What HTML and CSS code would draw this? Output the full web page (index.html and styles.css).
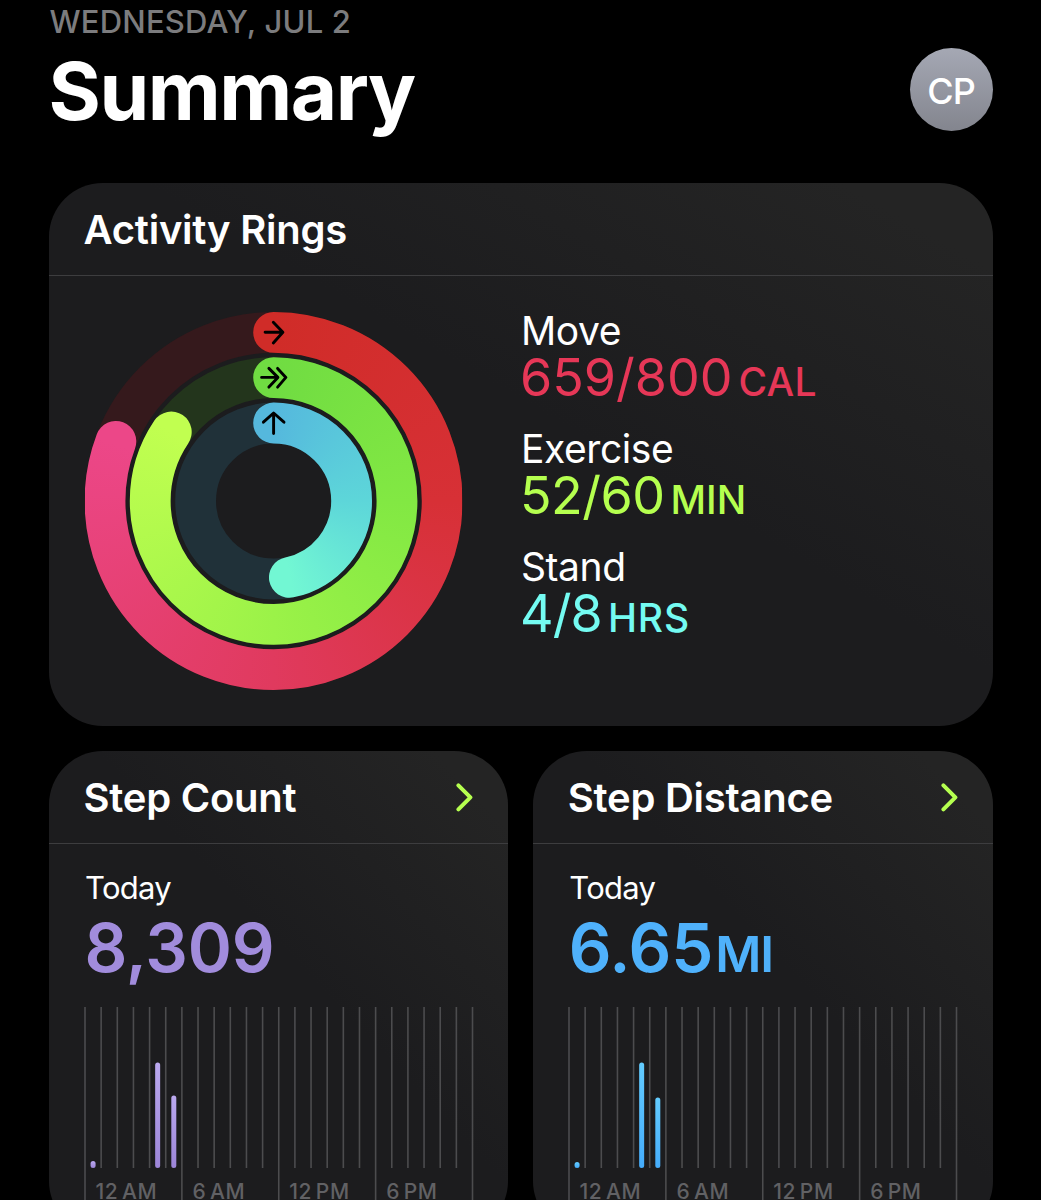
FILE: index.html
```html
<!DOCTYPE html>
<html lang="en">
<head>
  <meta charset="UTF-8">
  <meta name="viewport" content="width=device-width, initial-scale=1.0">
  <title>Summary</title>
  <link rel="stylesheet" href="styles.css">
</head>
<body>

<div class="page">
  <header class="header">
    <div class="header-text">
      <p class="date">Wednesday, Jul 2</p>
      <h1>Summary</h1>
    </div>
    <div class="avatar">CP</div>
  </header>

  <!-- Activity Rings -->
  <section class="card rings-card">
    <div class="card-header">
      <h2>Activity Rings</h2>
    </div>
    <div class="rings-body">
      <svg class="rings" viewBox="0.4 0 378 378">
        <defs>
          <mask id="move-mask" maskUnits="userSpaceOnUse" x="0" y="0" width="378" height="378">
            <circle class="arc" cx="189" cy="189" r="168.6" pathLength="360" stroke-dasharray="290.7 360" transform="rotate(-90 189 189)"/>
          </mask>
          <mask id="exercise-mask" maskUnits="userSpaceOnUse" x="0" y="0" width="378" height="378">
            <circle class="arc" cx="189" cy="189" r="123.4" pathLength="360" stroke-dasharray="304 360" transform="rotate(-90 189 189)"/>
          </mask>
          <mask id="stand-mask" maskUnits="userSpaceOnUse" x="0" y="0" width="378" height="378">
            <circle class="arc" cx="189" cy="189" r="78" pathLength="360" stroke-dasharray="168.3 360" transform="rotate(-90 189 189)"/>
          </mask>
        </defs>
        <circle class="track track-move" cx="189" cy="189" r="168.6"/>
        <circle class="track track-exercise" cx="189" cy="189" r="123.4"/>
        <circle class="track track-stand" cx="189" cy="189" r="78"/>
        <g mask="url(#move-mask)">
          <foreignObject width="378" height="378"><div class="fill fill-move"></div></foreignObject>
        </g>
        <g mask="url(#exercise-mask)">
          <foreignObject width="378" height="378"><div class="fill fill-exercise"></div></foreignObject>
        </g>
        <g mask="url(#stand-mask)">
          <foreignObject width="378" height="378"><div class="fill fill-stand"></div></foreignObject>
        </g>
        <g class="arrows">
          <path d="M180.5 20.3H198M188.7 10.2L198.3 20.3L188.7 31"/>
          <path d="M177 65.4H193M184.3 56.4L193.3 65.4L184.3 75.1M193 56.4L201.3 65.4L193 75.1"/>
          <path d="M189 121.5V101.5M178.8 110.2L189 101L199.4 110.2"/>
        </g>
      </svg>
      <div class="stats">
        <div class="stat move">
          <p class="stat-name">Move</p>
          <p class="stat-value">659/800<span class="unit">CAL</span></p>
        </div>
        <div class="stat exercise">
          <p class="stat-name">Exercise</p>
          <p class="stat-value">52/60<span class="unit">MIN</span></p>
        </div>
        <div class="stat stand">
          <p class="stat-name">Stand</p>
          <p class="stat-value">4/8<span class="unit">HRS</span></p>
        </div>
      </div>
    </div>
  </section>

  <div class="card-row">
    <!-- Step Count -->
    <section class="card small-card steps">
      <div class="card-header">
        <h2>Step Count</h2>
        <svg class="chevron" viewBox="0 0 18 30"><path d="M3.4 3.3L15.4 15.3L3.4 27.3"/></svg>
      </div>
      <div class="small-body">
        <p class="today">Today</p>
        <p class="total">8,309</p>
        <svg class="chart" viewBox="0 0 390 228" data-bars="0.5:7,4.5:105.5,5.5:72.5" data-color="purple"></svg>
      </div>
    </section>

    <!-- Step Distance -->
    <section class="card small-card distance">
      <div class="card-header">
        <h2>Step Distance</h2>
        <svg class="chevron" viewBox="0 0 18 30"><path d="M3.4 3.3L15.4 15.3L3.4 27.3"/></svg>
      </div>
      <div class="small-body">
        <p class="today">Today</p>
        <p class="total">6.65<span class="unit">MI</span></p>
        <svg class="chart" viewBox="0 0 390 228" data-bars="0.5:6,4.5:105.5,5.5:70.5" data-color="blue"></svg>
      </div>
    </section>
  </div>
</div>

<script src="charts.js"></script>
</body>
</html>
```
FILE: styles.css
```css
* {
  box-sizing: border-box;
}
body {
  font-family: Inter, "Liberation Sans", sans-serif;
  margin: 0;
  background-color: #000;
  color: #fff;
  height: 1200px;
  overflow: hidden;
}
h1, h2, p {
  margin: 0;
  white-space: nowrap;
}
.page {
  padding: 0 48.5px;
}
.header {
  display: flex;
  justify-content: space-between;
  height: 182.5px;
}
.header-text {
  padding: 2px 0 0 1px;
}
.date {
  font-size: 31px;
  line-height: 40px;
  font-weight: 500;
  text-transform: uppercase;
  color: #7c7c7e;
  letter-spacing: 0.2px;
}
h1 {
  font-size: 80px;
  line-height: 98px;
  font-weight: 700;
  letter-spacing: -1.5px;
  margin-left: -1px;
}
.avatar {
  width: 83px;
  height: 83px;
  margin-top: 48.4px;
  border-radius: 50%;
  background: linear-gradient(#a5a8b4, #83858e);
  font-size: 36px;
  line-height: 87px;
  font-weight: 500;
  text-align: center;
  letter-spacing: -1px;
}
/* Cards */
.card {
  border-radius: 54px;
  background: linear-gradient(to top right, #1c1c1e 55%, #242424 92%);
  overflow: hidden;
}
.card-header {
  display: flex;
  align-items: center;
  justify-content: space-between;
  height: 93px;
  padding: 0 35px;
  border-bottom: 1px solid #3d3d3f;
}
h2 {
  font-size: 40px;
  line-height: 48px;
  font-weight: 600;
  letter-spacing: -0.25px;
  padding-top: 2px;
}
.rings-card {
  height: 543px;
}
.rings-body {
  display: flex;
  padding: 36.5px 36px 0;
}
.rings {
  width: 378px;
  height: 378px;
  flex: none;
  overflow: visible;
}
.track, .arc {
  fill: none;
  stroke-width: 40.8;
}
.arc {
  stroke: #fff;
  stroke-linecap: round;
}
.track-move {
  stroke: #35191c;
}
.track-exercise {
  stroke: #23351c;
}
.track-stand {
  stroke: #203139;
}
.fill {
  width: 378px;
  height: 378px;
}
.fill-move {
  background: conic-gradient(from -20deg, #d02c28 20deg, #d73036 110deg, #e03a5e 200deg, #ec4788 310deg, #ec4788 330deg, #d02c28 330deg);
}
.fill-exercise {
  background: conic-gradient(from -20deg, #70dc42 20deg, #82e843 110deg, #9bf248 200deg, #c1ff50 324deg, #c1ff50 335deg, #70dc42 335deg);
}
.fill-stand {
  background: conic-gradient(from -20deg, #55b8dd 20deg, #5dd6d9 110deg, #72f7d3 188deg, #72f7d3 250deg, #55b8dd 250deg);
}
.arrows {
  fill: none;
  stroke: #000;
  stroke-width: 2.9;
  stroke-linecap: round;
  stroke-linejoin: round;
}
.stats {
  display: flex;
  flex-direction: column;
  gap: 18px;
  margin-top: -1.5px;
  padding-left: 58.4px;
}
.stat {
  height: 100px;
}
.stat-name {
  font-size: 39px;
  line-height: 40px;
  letter-spacing: -0.4px;
}
.stat-value {
  font-size: 52px;
  line-height: 54px;
  margin-left: -1px;
}
.stat-value .unit {
  font-size: 39px;
  font-weight: 500;
  margin-left: 6px;
  letter-spacing: 0;
}
.move .stat-value {
  color: #e63757;
}
.move .unit {
  letter-spacing: 0.3px;
}
.exercise .stat-value {
  color: #b5ff4f;
  letter-spacing: -0.5px;
}
.stand .stat-value {
  color: #74fbf2;
  letter-spacing: -0.8px;
}
.stand .stat-value .unit {
  letter-spacing: 0.8px;
}
/* Step cards */
.card-row {
  display: flex;
  gap: 24.5px;
  margin-top: 25.5px;
}
.small-card {
  flex: 1;
  height: 484px;
}
.chevron {
  width: 18px;
  height: 30px;
  fill: none;
  stroke: #b5ff4f;
  stroke-width: 4;
  stroke-linecap: round;
  stroke-linejoin: round;
}
.small-body {
  padding: 23.5px 35px 0;
}
.today {
  font-size: 31px;
  line-height: 40px;
  padding-left: 1.5px;
  letter-spacing: -0.7px;
}
.total {
  font-size: 67px;
  line-height: 80px;
  height: 80px;
  font-weight: 600;
  padding-left: 1px;
  letter-spacing: -0.2px;
}
.total .unit {
  font-size: 50px;
  line-height: 1;
  margin-left: 2px;
  letter-spacing: -1px;
}
.steps .total {
  color: #a18cdc;
}
.distance .total {
  color: #4fb1fb;
}
.chart {
  display: block;
  width: 390px;
  height: 228px;
  margin-top: 19.5px;
}
.grid-line {
  stroke: #4c4c4e;
  stroke-width: 1.6;
}
.axis-label {
  font-size: 21px;
  font-weight: 500;
  fill: #616164;
  letter-spacing: 0.6px;
  word-spacing: -2.5px;
}
```
FILE: charts.js
```js
const SVG_NS = 'http://www.w3.org/2000/svg';
const HOUR = 16.146; // Width of one hour column
const LEFT = 1;
const BASE = 161;
const colors = {
  purple: ['#bba9f0', '#9c85d8'],
  blue: ['#63ccff', '#45acfb']
};

function add(parent, name, attrs, text) {
  const el = document.createElementNS(SVG_NS, name);
  for (const key in attrs) el.setAttribute(key, attrs[key]);
  if (text) el.textContent = text;
  parent.appendChild(el);
  return el;
}

document.querySelectorAll('.chart').forEach((chart) => {
  const color = chart.dataset.color;
  const gradient = add(chart, 'linearGradient', { id: color, x1: 0, y1: 0, x2: 0, y2: 1 });
  add(gradient, 'stop', { offset: 0, 'stop-color': colors[color][0] });
  add(gradient, 'stop', { offset: 1, 'stop-color': colors[color][1] });

  // Every sixth line runs down past the labels
  for (let i = 0; i <= 24; i++) {
    const x = LEFT + i * HOUR;
    add(chart, 'line', { class: 'grid-line', x1: x, x2: x, y1: 0, y2: i % 6 === 0 ? 200 : BASE });
  }

  ['12 AM', '6 AM', '12 PM', '6 PM'].forEach((label, i) => {
    add(chart, 'text', { class: 'axis-label', x: LEFT + i * 6 * HOUR + 10.5, y: 192 }, label);
  });

  chart.dataset.bars.split(',').forEach((bar) => {
    const [hour, height] = bar.split(':').map(Number);
    add(chart, 'rect', {
      x: LEFT + hour * HOUR - 2.5, y: BASE - height, width: 5, height: height, rx: 2.5, fill: `url(#${color})`
    });
  });
});
```
